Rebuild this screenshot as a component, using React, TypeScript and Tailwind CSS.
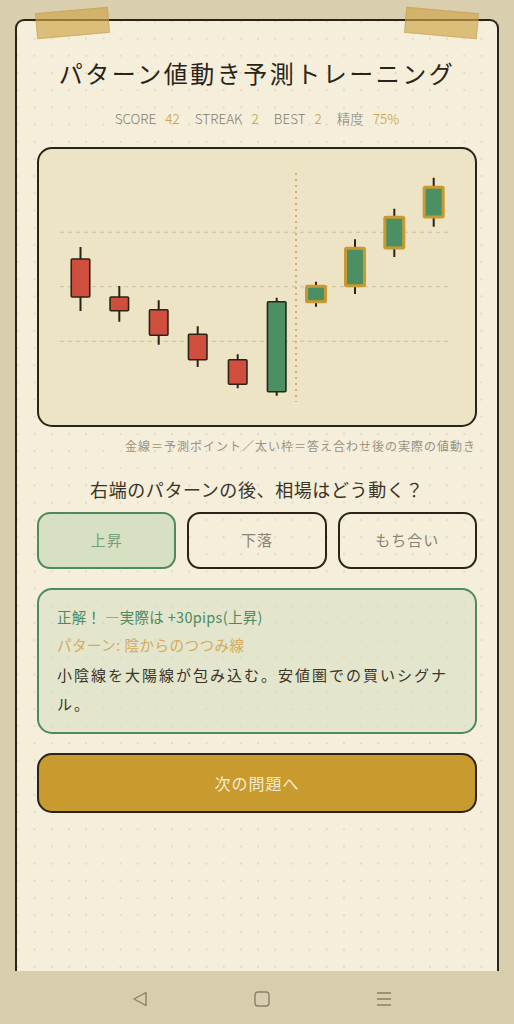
import React from "react";

type Candle = { cx: number; bt: number; bb: number; wt: number; wb: number; c: "r" | "g"; f?: boolean };

const candles: Candle[] = [
  { cx: 80.5, bt: 259, bb: 297, wt: 247, wb: 311, c: "r" },
  { cx: 119.3, bt: 297, bb: 310.7, wt: 286, wb: 321.7, c: "r" },
  { cx: 158.7, bt: 309.7, bb: 335.3, wt: 300.3, wb: 344.7, c: "r" },
  { cx: 197.7, bt: 334.3, bb: 359.7, wt: 326.3, wb: 367, c: "r" },
  { cx: 237.7, bt: 359.7, bb: 384.3, wt: 354.3, wb: 388.3, c: "r" },
  { cx: 276.7, bt: 301.7, bb: 391.7, wt: 297.7, wb: 395.7, c: "g" },
  { cx: 316, bt: 286.3, bb: 301.7, wt: 281.7, wb: 306.7, c: "g", f: true },
  { cx: 355, bt: 248.3, bb: 285.7, wt: 239.3, wb: 294, c: "g", f: true },
  { cx: 394.3, bt: 217.3, bb: 248, wt: 208.7, wb: 257, c: "g", f: true },
  { cx: 433.7, bt: 187.3, bb: 217, wt: 177.7, wb: 226.7, c: "g", f: true },
];

function Chart() {
  return (
    <svg viewBox="39 149 436 276" width="436" height="276" className="block">
      {[232.3, 286.7, 341.3].map((y) => (
        <line key={y} x1={60} x2={452} y1={y} y2={y} stroke="#d3c8a6" strokeWidth={1.2} strokeDasharray="4 4" />
      ))}
      <line x1={296} x2={296} y1={173} y2={402} stroke="#d2a552" strokeWidth={1.6} strokeDasharray="2 4" />
      {candles.map((k, i) => {
        const w = k.f ? 19 : 18.5;
        return (
          <g key={i}>
            <line x1={k.cx} x2={k.cx} y1={k.wt} y2={k.wb} stroke="#2a2418" strokeWidth={2} />
            <rect
              x={k.cx - w / 2}
              y={k.bt}
              width={w}
              height={k.bb - k.bt}
              rx={1}
              fill={k.c === "r" ? "#d04e3e" : "#4b8f62"}
              stroke={k.f ? "#c99a33" : "#2a2418"}
              strokeWidth={k.f ? 3 : 1.6}
            />
          </g>
        );
      })}
    </svg>
  );
}

export default function App() {
  const font = { fontFamily: '"Noto Sans CJK JP", "Noto Sans", sans-serif' };
  return (
    <div className="relative h-[1024px] w-[514px] overflow-hidden bg-[#d9cfae] flex flex-col" style={font}>
      <div className="flex-1 overflow-hidden px-[15px] pt-[19px]">
        <div className="h-full rounded-t-[9px] border-[2.5px] border-b-0 border-[#2a2418] bg-[#f4eedb] bg-[radial-gradient(circle,#e2dbc2_1px,transparent_1.3px)] bg-[length:17.2px_17.2px] bg-[position:9px_9px] px-5 pt-[34px]">
          <h1 className="text-center text-[24px] leading-[36px] tracking-[2.5px] text-[#2a2418] font-normal">
            パターン値動き予測トレーニング
          </h1>
          <div className="mt-[17px] flex justify-center items-center text-[13.5px] leading-[20px] text-[#857d6c] font-light">
            <span>SCORE</span>
            <span className="ml-[9px] text-[#c99a33]">42</span>
            <span className="ml-[15px]">STREAK</span>
            <span className="ml-[9px] text-[#c99a33]">2</span>
            <span className="ml-[15px]">BEST</span>
            <span className="ml-[9px] text-[#c99a33]">2</span>
            <span className="ml-[15px]">精度</span>
            <span className="ml-[9px] text-[#c99a33]">75%</span>
          </div>
          <div className="mt-[19px] h-[280px] rounded-[15px] border-2 border-[#2a2418] bg-[#ede3c5] overflow-hidden">
            <Chart />
          </div>
          <p className="mt-[11px] text-right text-[12px] leading-[16px] tracking-[1px] text-[#9a9282] pr-[1px]">
            金線＝予測ポイント／太い枠＝答え合わせ後の実際の値動き
          </p>
          <p className="mt-[22px] text-center text-[18px] leading-[26px] tracking-[0.6px] text-[#3a3428]">
            右端のパターンの後、相場はどう動く？
          </p>
          <div className="mt-[10px] grid grid-cols-3 gap-[11px]">
            <button className="h-[57px] rounded-[13px] border-[2.5px] border-[#4f8a5e] bg-[#cfdcbc]/80 text-[15px] tracking-[1px] text-[#74a07e]">
              上昇
            </button>
            <button className="h-[57px] rounded-[13px] border-[2.5px] border-[#2a2418] text-[15px] tracking-[1px] text-[#8a8272]">
              下落
            </button>
            <button className="h-[57px] rounded-[13px] border-[2.5px] border-[#2a2418] text-[15px] tracking-[1px] text-[#8a8272]">
              もち合い
            </button>
          </div>
          <div className="mt-[19px] rounded-[15px] border-[2.5px] border-[#4f8a5e] bg-[#d6dfc0]/55 pl-[18px] pr-[18px] pt-[16px] pb-[14px]">
            <p className="text-[14.5px] leading-[22px] text-[#4f8a5e] tracking-[0.3px]">
              正解！ ―実際は +30pips(上昇)
            </p>
            <p className="mt-[6px] text-[14.5px] leading-[22px] text-[#d3ab5a] tracking-[0.5px]">
              パターン: 陰からのつつみ線
            </p>
            <p className="mt-[4px] text-[15px] leading-[29px] tracking-[2px] text-[#3a3428]">
              小陰線を大陽線が包み込む。安値圏での買いシグナル。
            </p>
          </div>
          <button className="mt-[19px] h-[60px] w-full rounded-[15px] border-[2.5px] border-[#2a2418] bg-[#c99a2e] text-[16px] tracking-[1px] text-[#f6ecd0]">
            次の問題へ
          </button>
        </div>
      </div>
      <div className="h-[53px] shrink-0 bg-[#d8cdac] flex items-center justify-center gap-[104px] pt-[2px] pl-[9px]">
        <svg width="18" height="18" viewBox="0 0 18 18" fill="none" stroke="#8a8068" strokeWidth="1.4" strokeLinejoin="round">
          <path d="M15 2.5 L15 15.5 L3 9 Z" />
        </svg>
        <svg width="18" height="18" viewBox="0 0 18 18" fill="none" stroke="#8a8068" strokeWidth="1.4">
          <rect x="2" y="2" width="14" height="14" rx="3" />
        </svg>
        <svg width="18" height="18" viewBox="0 0 18 18" fill="none" stroke="#8a8068" strokeWidth="1.4">
          <path d="M2 3 H16 M2 9 H16 M2 15 H16" />
        </svg>
      </div>
      <div className="absolute left-[36px] top-[10px] h-[26px] w-[73px] -rotate-[5deg] bg-[#cfa548]/65 border border-[#bf9a4a]/40" />
      <div className="absolute left-[405px] top-[10px] h-[26px] w-[73px] rotate-[5deg] bg-[#cfa548]/65 border border-[#bf9a4a]/40" />
    </div>
  );
}
